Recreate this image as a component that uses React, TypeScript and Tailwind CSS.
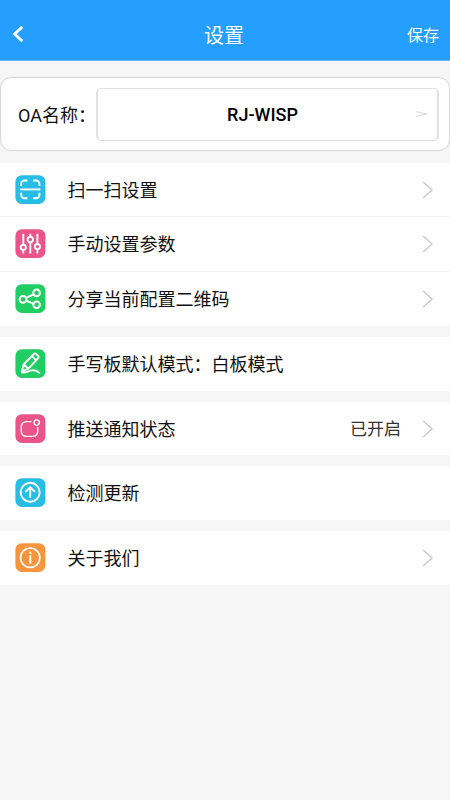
import type { ReactNode } from "react";

type IconName = "scan" | "sliders" | "share" | "pen" | "notice" | "update" | "about";

type Row = {
  arrow?: boolean;
  height: string;
  icon: IconName;
  label: string;
  value?: string;
};

const groups: Row[][] = [
  [
    { arrow: true, height: "h-[54px]", icon: "scan", label: "扫一扫设置" },
    { arrow: true, height: "h-[55px]", icon: "sliders", label: "手动设置参数" },
    { arrow: true, height: "h-[54px]", icon: "share", label: "分享当前配置二维码" },
  ],
  [{ height: "h-[54px]", icon: "pen", label: "手写板默认模式：白板模式" }],
  [{ arrow: true, height: "h-[53px]", icon: "notice", label: "推送通知状态", value: "已开启" }],
  [{ height: "h-[54px]", icon: "update", label: "检测更新" }],
  [{ arrow: true, height: "h-[54px]", icon: "about", label: "关于我们" }],
];

const colors: Record<IconName, string> = {
  scan: "fill-[#27bde5]",
  sliders: "fill-[#eb5486]",
  share: "fill-[#20ce63]",
  pen: "fill-[#20ce63]",
  notice: "fill-[#eb5486]",
  update: "fill-[#27bde5]",
  about: "fill-[#f7953f]",
};

const glyphs: Record<IconName, ReactNode> = {
  scan: (
    <g strokeWidth="1.9" strokeLinecap="butt">
      <path d="M6.2 11V8.8a3.3 3.3 0 0 1 3.3-3.3h2.9M18.2 5.5h2.9a3.3 3.3 0 0 1 3.3 3.3V11M24.4 17.8V20a3.3 3.3 0 0 1-3.3 3.3h-2.9M12.4 23.3H9.5A3.3 3.3 0 0 1 6.2 20v-2.2" />
      <path d="M5.2 14.4h20.2" />
    </g>
  ),
  sliders: (
    <g strokeWidth="1.9" strokeLinecap="butt">
      <path d="M8.300 4.700v10.500M8.300 21.300v3.100M15.300 4.700v2.600M15.300 13.300v11.100M22.400 4.700v9.900M22.400 20.600v3.800" />
      <circle cx="8.3" cy="18.3" r="2.6" />
      <circle cx="15.3" cy="10.4" r="2.7" />
      <circle cx="22.4" cy="17.6" r="2.6" />
    </g>
  ),
  share: (
    <g strokeWidth="2">
      <circle cx="8" cy="15.4" r="3.4" />
      <circle cx="21.6" cy="8.9" r="3.3" />
      <circle cx="21.6" cy="20.8" r="3.3" />
      <path d="M11.3 13.9l7.2-3.5M11.3 16.700l7.200 2.900" />
    </g>
  ),
  pen: (
    <g strokeWidth="1.9" strokeLinejoin="round">
      <path d="M8.600 15.500 18.700 5q1-1 2.100-.2l2.400 2.100q1 1 .1 2.100L13.400 19.600l-6.600 2.800zM16.700 7.100l4.500 4M8.600 15.500l4.800 4.100" />
      <path d="M7 23.500c4 .4 6.700-1.500 10-2.100 3.100-.5 5.300.6 7.300 2.500" />
    </g>
  ),
  notice: (
    <g strokeWidth="1.4">
      <path d="M16 7.600h-4.700a5 5 0 0 0-5 5v4.800a5 5 0 0 0 5 5h6.400a5 5 0 0 0 5-5V13.300" />
      <circle cx="21.7" cy="8.5" r="2.6" />
    </g>
  ),
  update: (
    <g strokeWidth="1.9">
      <circle cx="15.2" cy="14.3" r="9.500" />
      <path d="M15.2 19V9.700M11 13.300l4.200-4 4.200 4" />
    </g>
  ),
  about: (
    <g strokeWidth="1.7">
      <circle cx="15.2" cy="14.7" r="9.7" />
      <path d="M15.300 12.300v8.400M15.300 8.800v1.900" strokeLinecap="butt" strokeWidth="2" />
    </g>
  ),
};

function RowIcon({ name }: { name: IconName }) {
  return (
    <svg viewBox="0 0 31 29" className="mb-px h-[29px] w-[31px] shrink-0" fill="none" stroke="white" strokeLinecap="round">
      <rect x="0.4" y="0.2" width="30" height="28.7" rx="6.500" stroke="none" className={colors[name]} />
      {glyphs[name]}
    </svg>
  );
}

function Arrow() {
  return (
    <svg viewBox="0 0 12 18" className="h-[18px] w-3 shrink-0" fill="none" stroke="#cacaca" strokeWidth="1.5">
      <path d="M1.2 1l8.8 8-8.800 8" />
    </svg>
  );
}

function SettingRow({ row }: { row: Row }) {
  return (
    <div className={`flex items-center pr-4 pl-[15px] ${row.height}`}>
      <RowIcon name={row.icon} />
      <span className="ml-[21.5px] flex-1 pt-0.5 text-[18px] leading-[26px] text-[#111]">{row.label}</span>
      {row.value && <span className="mr-[21px] pt-px text-[17px] leading-6 text-[#333]">{row.value}</span>}
      {row.arrow && <Arrow />}
    </div>
  );
}

export default function App() {
  return (
    <main className="flex h-[800px] w-[450px] flex-col overflow-hidden bg-[#f6f6f6] font-[Roboto,'Noto_Sans_CJK_SC',sans-serif]">
      <header className="grid h-[61px] shrink-0 grid-cols-3 items-center border-b border-[#6bbcfb] bg-[#249fff] pt-2 pr-[11px] pl-3 text-white">
        <svg viewBox="0 0 12 18" className="h-[18px] w-3" fill="none" stroke="currentColor" strokeWidth="2.8">
          <path d="M10.3 1.9 2.6 9l7.700 7.100" />
        </svg>
        <h1 className="pt-[3px] pr-[3px] text-center text-[20px] leading-7">设置</h1>
        <button className="pt-[3px] text-right text-[16px] leading-6">保存</button>
      </header>

      <section className="mt-4 flex h-[74px] shrink-0 items-center rounded-[11px] border border-[#d6d6d6] bg-white pr-[10px] pl-[17px]">
        <label className="w-[78px] shrink-0 pt-0.5 text-[18px] whitespace-nowrap text-[#111]">OA名称：</label>
        <div className="flex h-[53px] flex-1 items-center rounded-[5px] border border-r-2 border-l-2 border-[#e2e2e2] pr-[9px] pl-[11px]">
          <span className="flex-1 pt-px text-center text-[18px] font-medium text-black">RJ-WISP</span>
          <svg viewBox="0 0 12 6" className="h-1.5 w-3" fill="none" stroke="#ccc" strokeWidth="0.7">
            <path d="M0 .7 11 3 0 5.300" />
          </svg>
        </div>
      </section>

      <div className="mt-3 flex flex-col gap-[11px]">
        {groups.map((rows) => (
          <section key={rows[0].label} className="divide-y divide-[#f2f2f2] bg-white">
            {rows.map((row) => (
              <SettingRow key={row.label} row={row} />
            ))}
          </section>
        ))}
      </div>
    </main>
  );
}
